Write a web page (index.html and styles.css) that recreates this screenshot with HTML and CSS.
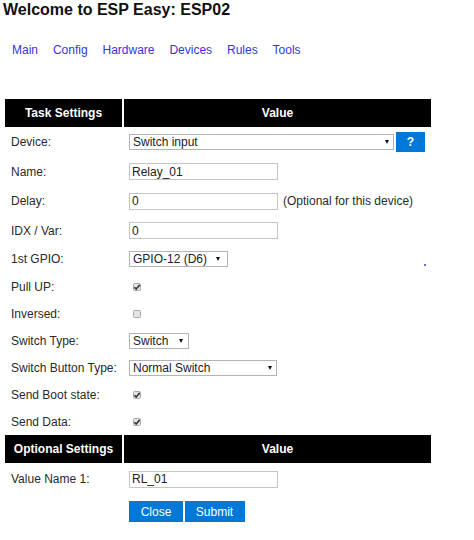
FILE: index.html
```html
<!DOCTYPE html>
<html>
<head>
<meta charset="utf-8">
<title>ESP Easy</title>
<link rel="stylesheet" href="styles.css">
</head>
<body>
<h1 class="title">Welcome to ESP Easy: ESP02</h1>
<nav class="menu">
  <a href="#">Main</a>
  <a href="#">Config</a>
  <a href="#">Hardware</a>
  <a href="#">Devices</a>
  <a href="#">Rules</a>
  <a href="#">Tools</a>
</nav>
<form class="settings">
  <div class="head">
    <div class="hcell">Task Settings</div>
    <div class="hcell">Value</div>
  </div>
  <div class="row r30">
    <div class="label">Device:</div>
    <div class="value">
      <span class="sel w-device"><select><option>Switch input</option></select></span>
      <button type="button" class="btn help">?</button>
    </div>
  </div>
  <div class="row r29">
    <div class="label">Name:</div>
    <div class="value"><input class="txt" type="text" value="Relay_01"></div>
  </div>
  <div class="row r30">
    <div class="label">Delay:</div>
    <div class="value"><input class="txt" type="text" value="0"><span class="note">(Optional for this device)</span></div>
  </div>
  <div class="row r29">
    <div class="label">IDX / Var:</div>
    <div class="value"><input class="txt" type="text" value="0"></div>
  </div>
  <div class="row r28">
    <div class="label">1st GPIO:</div>
    <div class="value">
      <span class="sel w-gpio"><select><option>GPIO-12 (D6)</option></select></span>
      <span class="dot"></span>
    </div>
  </div>
  <div class="row r27">
    <div class="label">Pull UP:</div>
    <div class="value"><span class="cb"><svg viewBox="0 0 8 8" width="8" height="8"><path d="M1.4 4.2 L3.2 6 L6.8 1.8" fill="none" stroke="#333" stroke-width="1.6"/></svg></span></div>
  </div>
  <div class="row r27">
    <div class="label">Inversed:</div>
    <div class="value"><span class="cb"></span></div>
  </div>
  <div class="row r27">
    <div class="label">Switch Type:</div>
    <div class="value"><span class="sel w-switch"><select><option>Switch</option></select></span></div>
  </div>
  <div class="row r27">
    <div class="label">Switch Button Type:</div>
    <div class="value"><span class="sel w-sbt"><select><option>Normal Switch</option></select></span></div>
  </div>
  <div class="row r27">
    <div class="label">Send Boot state:</div>
    <div class="value"><span class="cb"><svg viewBox="0 0 8 8" width="8" height="8"><path d="M1.4 4.2 L3.2 6 L6.8 1.8" fill="none" stroke="#333" stroke-width="1.6"/></svg></span></div>
  </div>
  <div class="row r27">
    <div class="label">Send Data:</div>
    <div class="value"><span class="cb"><svg viewBox="0 0 8 8" width="8" height="8"><path d="M1.4 4.2 L3.2 6 L6.8 1.8" fill="none" stroke="#333" stroke-width="1.6"/></svg></span></div>
  </div>
  <div class="head">
    <div class="hcell">Optional Settings</div>
    <div class="hcell">Value</div>
  </div>
  <div class="row r32">
    <div class="label">Value Name 1:</div>
    <div class="value"><input class="txt" type="text" value="RL_01"></div>
  </div>
  <div class="actions">
    <button type="button" class="btn close">Close</button>
    <button type="button" class="btn submit">Submit</button>
  </div>
</form>
</body>
</html>
```

FILE: styles.css
```css
* { box-sizing: border-box; }
html, body { margin: 0; padding: 0; background: #fff; }
body {
  font-family: "Liberation Sans", Arial, sans-serif;
  font-size: 12px;
  color: #222;
  width: 474px;
  height: 540px;
  overflow: hidden;
}
.title {
  margin: 0;
  padding: 1px 0 0 3px;
  font-size: 16px;
  line-height: 18px;
  font-weight: bold;
  color: #111;
}
.menu {
  display: flex;
  gap: 14.9px;
  margin: 24px 0 0 12px;
  line-height: 14px;
}
.menu a {
  color: #3535d8;
  text-decoration: none;
  font-size: 12px;
}
.settings {
  margin: 42px 0 0 5px;
  width: 426px;
}
.head {
  display: grid;
  grid-template-columns: 117px 307px;
  gap: 2px;
  height: 28px;
}
.hcell {
  background: #000;
  color: #fff;
  font-weight: bold;
  font-size: 12px;
  display: flex;
  align-items: center;
  justify-content: center;
}
.row {
  display: grid;
  grid-template-columns: 119px 307px;
}
.r27 { height: 27px; }
.r28 { height: 28px; }
.r29 { height: 29px; }
.r30 { height: 30px; }
.r32 { height: 32px; }
.label {
  padding-left: 6px;
  display: flex;
  align-items: center;
  color: #2a2a2a;
  white-space: nowrap;
}
.value {
  padding-left: 5px;
  display: flex;
  align-items: center;
}
.txt {
  width: 149px;
  height: 17px;
  border: 1px solid #c6c6c6;
  padding: 0 0 0 2px;
  font: 12px "Liberation Sans", Arial, sans-serif;
  color: #222;
  outline: none;
  margin: 0;
}
.note { margin-left: 5px; color: #2a2a2a; }
.sel {
  position: relative;
  display: inline-block;
  height: 16px;
}
.sel select {
  -webkit-appearance: none;
  appearance: none;
  width: 100%;
  height: 16px;
  border: 1px solid #b4b4b4;
  border-radius: 0;
  background: #fff;
  padding: 0 0 0 3px;
  margin: 0;
  font: 12px "Liberation Sans", Arial, sans-serif;
  line-height: 14px;
  color: #222;
  display: block;
}
.sel::after {
  content: "";
  position: absolute;
  right: 5px;
  top: 6px;
  border-left: 2.5px solid transparent;
  border-right: 2.5px solid transparent;
  border-top: 4px solid #111;
  pointer-events: none;
}
.w-device { width: 265px; }
.w-gpio { width: 99px; }
.w-gpio::after { right: 8px; }
.w-switch { width: 60px; }
.w-switch::after { right: 6px; }
.w-sbt { width: 148px; }
.btn {
  background: #0078d7;
  color: #fff;
  border: none;
  margin: 0;
  padding: 0;
  font: 12px "Liberation Sans", Arial, sans-serif;
  cursor: pointer;
}
.help {
  width: 29px;
  height: 20px;
  margin-left: 2px;
  font-weight: bold;
}
.dot {
  width: 2px;
  height: 2px;
  background: #3a3ad0;
  border-radius: 1px;
  margin-left: auto;
  margin-right: 5px;
  align-self: flex-end;
  margin-bottom: 7px;
}
.cb {
  width: 8px;
  height: 8px;
  margin-left: 4px;
  border: 1px solid #a8a8a8;
  border-radius: 1.5px;
  background: #e4e4e4;
  display: flex;
  align-items: center;
  justify-content: center;
  overflow: hidden;
}
.cb svg { display: block; flex: none; }
.actions {
  display: flex;
  gap: 1.5px;
  margin: 6px 0 0 124px;
}
.close { width: 54px; height: 21px; }
.submit { width: 60px; height: 21px; }
```
